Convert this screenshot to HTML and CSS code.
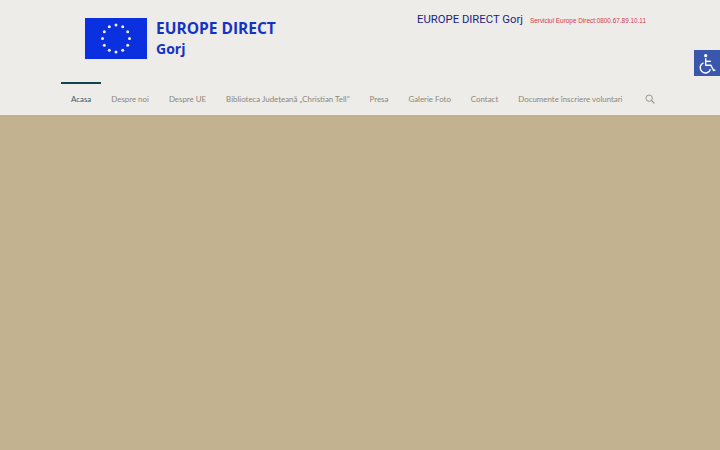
FILE: index.html
```html
<!DOCTYPE html>
<html lang="ro">
<head>
<meta charset="utf-8">
<title>Europe Direct Gorj</title>
<link rel="stylesheet" href="styles.css">
</head>
<body>
<header class="header">
  <div class="top">
    <div class="logo">
      <svg class="flag" width="62" height="41" viewBox="0 0 62 41">
        <rect width="62" height="41" fill="#0a30e0"/>
        <g fill="#f4f0c8">
          <circle cx="31" cy="7" r="1.5"/><circle cx="37.7" cy="8.8" r="1.5"/><circle cx="42.7" cy="13.7" r="1.5"/>
          <circle cx="44.5" cy="20.5" r="1.5"/><circle cx="42.7" cy="27.3" r="1.5"/><circle cx="37.7" cy="32.2" r="1.5"/>
          <circle cx="31" cy="34" r="1.5"/><circle cx="24.3" cy="32.2" r="1.5"/><circle cx="19.3" cy="27.3" r="1.5"/>
          <circle cx="17.5" cy="20.5" r="1.5"/><circle cx="19.3" cy="13.7" r="1.5"/><circle cx="24.3" cy="8.8" r="1.5"/>
        </g>
      </svg>
      <div class="logo-text">
        <div class="logo-title">EUROPE DIRECT</div>
        <div class="logo-sub">Gorj</div>
      </div>
    </div>
    <div class="contact">
      <span class="contact-name">EUROPE DIRECT Gorj</span>
      <span class="contact-phone">Serviciul Europe Direct:0800.67.89.10.11</span>
    </div>
  </div>
  <nav class="nav">
    <a class="item active">Acasa</a>
    <a class="item">Despre noi</a>
    <a class="item">Despre UE</a>
    <a class="item">Biblioteca Județeană „Christian Tell”</a>
    <a class="item">Presa</a>
    <a class="item">Galerie Foto</a>
    <a class="item">Contact</a>
    <a class="item">Documente înscriere voluntari</a>
    <a class="item search">
      <svg width="10" height="10" viewBox="0 0 12 12" fill="none" stroke="#8d8678" stroke-width="1">
        <circle cx="5" cy="5" r="3.8"/><path d="M8 8l3.3 3.3" stroke-width="1.4"/>
      </svg>
    </a>
  </nav>
</header>
<main class="main"></main>
<a class="a11y">
  <svg width="22" height="24" viewBox="0 0 22 24" fill="none" stroke="#fff" stroke-width="1.6">
    <circle cx="9.5" cy="3" r="1.9" fill="#fff" stroke="none"/>
    <path d="M9.5 6v8h6l3 6 2-.8" stroke-linejoin="round"/>
    <path d="M9.5 9.5h6"/>
    <path d="M7 11.2a6 6 0 1 0 8 7.3"/>
  </svg>
</a>
</body>
</html>
```
FILE: styles.css
```css
html, body {
  margin: 0;
  padding: 0;
  height: 100%;
  overflow: hidden;
  background: #c3b28f;
  font-family: "Lato", "Liberation Sans", sans-serif;
}
.header {
  height: 115px;
  background: #eeece9;
  box-sizing: border-box;
  padding: 13px 61px 0;
  display: flex;
  flex-direction: column;
}
.top {
  height: 69px;
  display: flex;
  justify-content: space-between;
  padding: 0 13px 0 24px;
}
.logo {
  display: flex;
  gap: 9px;
  padding-top: 5px;
  align-self: flex-start;
}
.flag { display: block; }
.logo-text {
  color: #1433c4;
  font-family: "Open Sans", sans-serif;
  font-weight: 700;
}
.logo-title {
  font-size: 15.5px;
  line-height: 20px;
}
.logo-sub {
  font-size: 14px;
  line-height: 20px;
  margin-top: 1px;
}
.contact {
  display: flex;
  align-items: baseline;
  gap: 7px;
  height: 16px;
}
.contact-name {
  color: #1c1f85;
  font-family: "Roboto", sans-serif;
  font-size: 11.3px;
}
.contact-phone {
  color: #cf3a4c;
  font-family: "Liberation Sans", sans-serif;
  font-size: 6.4px;
}
.nav {
  display: flex;
  height: 33px;
}
.item {
  border-top: 2px solid transparent;
  padding: 9px 10px 0;
  font-size: 7.9px;
  line-height: 12px;
  color: #8d8678;
  white-space: nowrap;
}
.item.active {
  border-top-color: #0f4350;
  color: #33606b;
}
.search { padding-top: 10px; padding-left: 12px; }
.main { height: 335px; }
.a11y {
  position: absolute;
  top: 50px;
  right: 0;
  width: 26px;
  height: 26px;
  background: #3b56ad;
  display: flex;
  align-items: center;
  justify-content: center;
}
.a11y svg { width: 20px; height: 21px; }
```
